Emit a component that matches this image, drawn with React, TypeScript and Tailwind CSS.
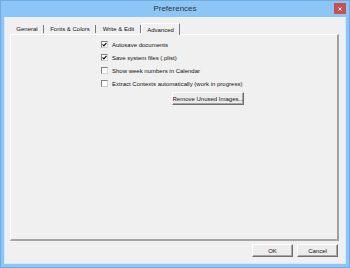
import React from 'react';

const tabs = [
  { label: 'General', w: 'w-[34px]' },
  { label: 'Fonts & Colors', w: 'w-[52px]' },
  { label: 'Write & Edit', w: 'w-[45px]' },
];

const options = [
  { label: 'Autosave documents', checked: true },
  { label: 'Save system files (.plist)', checked: true },
  { label: 'Show week numbers in Calendar', checked: false },
  { label: 'Extract Contexts automatically (work in progress)', checked: false },
];

const CheckBox: React.FC<{ checked: boolean }> = ({ checked }) => (
  <span className="w-[7px] h-[7px] shrink-0 bg-white border border-t-[#808080] border-l-[#808080] border-r-[#d4d4d4] border-b-[#d4d4d4] flex items-center justify-center">
    {checked && (
      <svg width="5" height="5" viewBox="0 0 5 5">
        <path d="M0.6 2.4 L1.9 3.8 L4.4 0.8" fill="none" stroke="#000" strokeWidth="1.1" />
      </svg>
    )}
  </span>
);

const Button: React.FC<{ label: string; className?: string }> = ({ label, className }) => (
  <button className={`h-[13px] bg-[#ececec] border border-t-white border-l-white border-r-[#6d6d6d] border-b-[#6d6d6d] shadow-[inset_-1px_-1px_0_#a9a9a9] text-[6px] leading-none whitespace-nowrap text-[#111] flex items-center justify-center ${className ?? ''}`}>
    {label}
  </button>
);

export default function App() {
  return (
    <div className="w-[350px] h-[268px] bg-[#8cc6f7] shadow-[inset_0_0_0_1px_#72abe0] flex flex-col overflow-hidden font-['Liberation_Sans',Arial,sans-serif]">
      {/* Title bar */}
      <div className="relative h-[17px] shrink-0 flex items-center justify-center text-[8px] text-[#333]">
        Preferences
        <div className="absolute right-[4px] top-[3px] w-[12px] h-[11px] bg-[#c75050] flex items-center justify-center">
          <svg width="4" height="4" viewBox="0 0 4 4">
            <path d="M0.5 0.5 L3.5 3.5 M3.5 0.5 L0.5 3.5" stroke="#fff" strokeWidth="1" />
          </svg>
        </div>
      </div>

      {/* Client area */}
      <div className="flex-1 mx-[4px] mb-[4px] bg-[#f0f0f0] border-l border-r border-b border-[#d5e8fa] flex flex-col pl-[5px] pr-[6px] pt-[6px] pb-[6px] text-[#111]">
        {/* Tabs */}
        <div className="h-[11px] shrink-0 flex items-end text-[6px] leading-none">
          {tabs.map((t) => (
            <div key={t.label} className={`${t.w} h-[11px] flex items-center justify-center relative`}>
              {t.label}
              <span className="absolute right-0 top-[2px] bottom-[1px] w-[1px] bg-[#7a7a7a]" />
            </div>
          ))}
          <div className="w-[39px] h-[12px] flex items-center justify-center border-t border-l border-white border-r border-r-[#7a7a7a] bg-[#f0f0f0] relative top-[1px]">
            Advanced
          </div>
        </div>

        {/* Panel */}
        <div className="flex-1 border-t border-l border-white border-r-2 border-b-2 border-r-[#a0a0a0] border-b-[#a6a6a6] pl-[90px] pt-[3px] text-[6px] leading-none">
          {options.map((o) => (
            <div key={o.label} className="h-[13px] flex items-center gap-[4px]">
              <CheckBox checked={o.checked} />
              <span>{o.label}</span>
            </div>
          ))}
          <Button label="Remove Unused Images..." className="mt-[2px] ml-[71px] w-[72px]" />
        </div>

        {/* Bottom buttons */}
        <div className="h-[13px] mt-[3px] shrink-0 flex justify-end gap-[4px] mr-[1px]">
          <Button label="OK" className="w-[41px]" />
          <Button label="Cancel" className="w-[41px]" />
        </div>
      </div>
    </div>
  );
}
